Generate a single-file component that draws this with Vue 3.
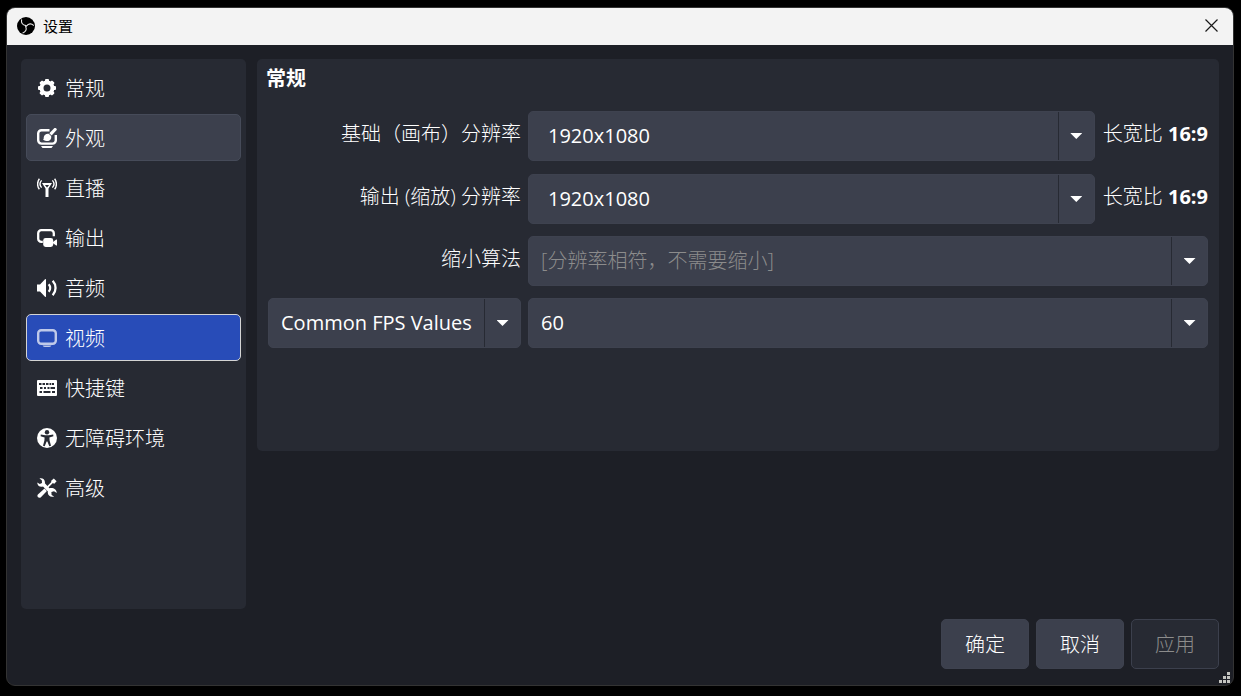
<script setup>
import { ref } from 'vue'

const current = ref('video')
const hovered = ref('appearance')
const sections = [
  { id: 'general', label: '常规' },
  { id: 'appearance', label: '外观' },
  { id: 'stream', label: '直播' },
  { id: 'output', label: '输出' },
  { id: 'audio', label: '音频' },
  { id: 'video', label: '视频' },
  { id: 'hotkeys', label: '快捷键' },
  { id: 'accessibility', label: '无障碍环境' },
  { id: 'advanced', label: '高级' },
]

const base = ref('1920x1080')
const output = ref('1920x1080')
const fpsType = ref('common')
const fps = ref('60')
</script>

<template>
  <div class="desktop">
    <div class="window" role="dialog" aria-labelledby="window-title">
      <header class="titlebar">
        <svg class="logo" viewBox="0 0 18 18" aria-hidden="true">
          <circle cx="9" cy="9" r="9" fill="#000" />
          <g fill="none" stroke="#e8e8e8" stroke-width="1.1" stroke-linecap="round">
            <path d="M4.6 2.8C4 5.6 5.2 8 9 8.600" />
            <path d="M4.6 2.8C4 5.6 5.2 8 9 8.600" transform="rotate(120 9 9)" />
            <path d="M4.6 2.8C4 5.6 5.2 8 9 8.600" transform="rotate(240 9 9)" />
          </g>
        </svg>
        <h1 id="window-title" class="title">设置</h1>
        <button class="close" type="button" aria-label="关闭">
          <svg viewBox="0 0 13 13"><path d="M.5.5l12 12M12.5.5l-12 12" fill="none" stroke="#1a1a1a" stroke-width="1.2" /></svg>
        </button>
      </header>

      <div class="body">
        <nav class="sidebar">
          <button
            v-for="s in sections"
            :key="s.id"
            type="button"
            class="nav-item"
            :class="{ active: current === s.id, hover: hovered === s.id }"
            @click="current = s.id"
            @mouseenter="hovered = s.id"
          >
            <svg class="icon" viewBox="0 0 20 20" aria-hidden="true">
              <g v-if="s.id === 'general'">
                <circle cx="10" cy="10" r="5.5" fill="none" stroke="#fff" stroke-width="4" />
                <g fill="#fff">
                  <rect v-for="a in 8" :key="a" x="8" y="1" width="4" height="3.6" rx="1" :transform="`rotate(${a * 45} 10 10)`" />
                </g>
              </g>
              <g v-else-if="s.id === 'appearance'">
                <path d="M12.5 2.200H4.500A3.300 3.300 0 0 0 1.200 5.500v6.800A3.300 3.300 0 0 0 4.500 15.600h11a3.300 3.300 0 0 0 3.300-3.300V7" fill="none" stroke="#fff" stroke-width="2.400" />
                <path d="M4 18h12l-1.500 2h-9z" fill="#fff" />
                <path d="M17.200.300c1.200-.600 3 .400 2.500 1.700L14.600 7.400 12.300 5.200z" fill="#fff" />
                <path d="M11.700 5.700l2.400 2.300c.700 2.800-1 5-3.500 5-1.700 0-3.300-.300-4.600-1.200 1-.600.600-1.600.800-2.700.400-2.300 2.400-3.800 4.900-3.400z" fill="#fff" />
              </g>
              <g v-else-if="s.id === 'stream'">
                <path d="M5 5h10l-3.500 5.500V19h-3v-8.500z" fill="#fff" />
                <path d="M7.900 6.900h4.200L10 9.500z" fill="#272a33" />
                <path d="M4.600 2.400c-2 2.200-2 5 0 7.200M2.400.800c-2.400 3-2.400 7.400 0 10.400M15.400 2.400c2 2.200 2 5 0 7.200M17.600.800c2.400 3 2.400 7.400 0 10.400" fill="none" stroke="#fff" stroke-width="1.400" />
              </g>
              <g v-else-if="s.id === 'output'">
                <path d="M5.800 13.800H4.300a3.100 3.100 0 0 1-3.100-3.100V5.300a3.100 3.100 0 0 1 3.100-3.100h9.400a3.100 3.100 0 0 1 3.100 3.100v3" fill="none" stroke="#fff" stroke-width="2.300" />
                <rect x="6.200" y="10" width="10" height="9" rx="2.400" fill="#fff" />
                <path d="M16 14l3.200-2.400q.8-.3.800.5v4.800q0 .8-.8.500L16 15.300z" fill="#fff" />
              </g>
              <g v-else-if="s.id === 'audio'">
                <path d="M0 6.500h3L8 1.200q1-.7 1 .5v16.600q0 1.200-1 .5L3 13.500H0z" fill="#fff" />
                <path d="M11.700 6.200c1.900 2.200 1.900 5.400 0 7.600M15.700 2.700c3.800 4.200 3.800 10.400 0 14.600" fill="none" stroke="#fff" stroke-width="2.300" />
              </g>
              <g v-else-if="s.id === 'video'" class="soft">
                <rect x="1.200" y="2.200" width="17.600" height="13.600" rx="3" fill="none" stroke="#fff" stroke-width="2.400" />
                <path d="M5.500 17.500h9q-1 1.500-2.500 1.500H8q-1.500 0-2.500-1.500z" fill="#fff" />
              </g>
              <g v-else-if="s.id === 'hotkeys'">
                <rect y="2" width="20" height="16" rx="1" fill="#fff" />
                <g fill="#272a33">
                  <path d="M2 5h2.500v2H2zM5.500 5H8v2H5.500zM9 5h2.500v2H9zM12.500 5h1.800v2h-1.800zM15 5h2v2h-2z" />
                  <path d="M3 9h2.500v2H3zM7 9h2v2H7zM10.500 9h2v2h-2zM13.500 9H18v2h-4.500z" />
                  <path d="M2.500 13H5v2H2.500zM6.500 13h7v2h-7zM15 13h3v2h-3z" />
                </g>
              </g>
              <g v-else-if="s.id === 'accessibility'">
                <circle cx="10" cy="10" r="10" fill="#fff" />
                <circle cx="10" cy="4.300" r="2.200" fill="#272a33" />
                <path d="M3.800 6.600L8.300 7.300h3.400l4.500-.7.200 1.700-4 1.100.2 3.200 1.400 5.100-1.700.5-1.900-4.700h-.8l-1.900 4.700-1.700-.5 1.400-5.100.2-3.200-4-1.100z" fill="#272a33" />
              </g>
              <g v-else>
                <path d="M17 2.700L9.500 10.200" stroke="#fff" stroke-width="1.700" />
                <path d="M16.800.5L19.600 3.200 17.300 5.800 14.400 4.600 14.200 2.800z" fill="#fff" />
                <path d="M7.500 10.500l2.400 2.400-6 6.300c-1.900 1.700-4.600-.6-3-2.800z" fill="#fff" />
                <path d="M2.500.5c3-.9 6 1.300 5.400 4.700l4.500 5.100c3.700-1 7.100 1 7.400 4.600l-2.800-1.700-2.600.8.200 3 2.500 1.400c-3.500 1.500-7.100-1.200-6.200-5L6 8.600C2.700 9.500.4 7.500.2 4.400l2.600 1.700 2.200-1.200-.2-2.600z" fill="#fff" />
              </g>
            </svg>
            <span>{{ s.label }}</span>
          </button>
        </nav>

        <main class="content">
          <section class="panel" aria-labelledby="panel-title">
            <h2 id="panel-title" class="panel-title">常规</h2>
            <div class="form">
              <label class="label" for="base">基础（画布）分辨率</label>
              <div class="field">
                <div class="combo">
                  <input id="base" v-model="base" class="value editable" type="text" />
                  <button class="arrow" type="button" aria-label="选择基础分辨率"></button>
                </div>
                <span class="ratio">长宽比 <b>16:9</b></span>
              </div>

              <label class="label" for="output">输出 (缩放) 分辨率</label>
              <div class="field">
                <div class="combo">
                  <input id="output" v-model="output" class="value editable" type="text" />
                  <button class="arrow" type="button" aria-label="选择输出分辨率"></button>
                </div>
                <span class="ratio">长宽比 <b>16:9</b></span>
              </div>

              <label class="label" for="filter">缩小算法</label>
              <div class="combo">
                <select id="filter" class="value" disabled>
                  <option>[分辨率相符，不需要缩小]</option>
                </select>
                <span class="arrow" aria-hidden="true"></span>
              </div>

              <div class="combo">
                <select v-model="fpsType" class="value" aria-label="FPS 类型">
                  <option value="common">Common FPS Values</option>
                </select>
                <span class="arrow" aria-hidden="true"></span>
              </div>
              <div class="combo">
                <select v-model="fps" class="value" aria-label="FPS">
                  <option>60</option>
                </select>
                <span class="arrow" aria-hidden="true"></span>
              </div>
            </div>
          </section>
        </main>
      </div>

      <footer class="footer">
        <button class="btn" type="button">确定</button>
        <button class="btn" type="button">取消</button>
        <button class="btn" type="button" disabled>应用</button>
      </footer>

      <svg class="grip" viewBox="0 0 11 11" aria-hidden="true">
        <path d="M8 0h3v3H8zM4 4h3v3H4zM8 4h3v3H8zM0 8h3v3H0zM4 8h3v3H4zM8 8h3v3H8z" fill="#c4c4c0" />
      </svg>
    </div>
  </div>
</template>

<style>
body {
  background: #000;
}
</style>

<style scoped>
.desktop {
  box-sizing: border-box;
  min-height: 100vh;
  padding: 7px 7px 10px 6px;
  display: flex;
  background: #000;
  color: #fff;
  font: 20px/28px "Open Sans", "Noto Sans CJK SC", sans-serif;
}
.desktop *,
.desktop *::before {
  box-sizing: border-box;
}
button,
input,
select {
  margin: 0;
  padding: 0;
  border: 0;
  background: none;
  color: inherit;
  font: inherit;
}
.window {
  position: relative;
  flex: 1;
  min-width: 0;
  display: flex;
  flex-direction: column;
  overflow: hidden;
  border: 1px solid #333333;
  border-radius: 9px;
  background: #1d1f26;
}
.titlebar {
  display: flex;
  align-items: center;
  height: 37px;
  padding: 0 15px 2px 10px;
  background: #f3f3f3;
  color: #000;
}
.logo {
  width: 18px;
  height: 18px;
}
.title {
  flex: 1;
  margin: 0 0 0 8px;
  font-size: 15px;
  line-height: 20px;
  font-weight: 400;
}
.close,
.close svg {
  display: block;
  width: 13px;
  height: 13px;
}
.body {
  flex: 1;
  display: flex;
  gap: 11px;
  padding: 14px 14px 10px;
}
.sidebar {
  flex: 0 0 225px;
  display: flex;
  flex-direction: column;
  gap: 3px;
  padding: 5px;
  border-radius: 5px;
  background: #272a33;
}
.nav-item {
  display: flex;
  align-items: center;
  gap: 8px;
  height: 47px;
  padding: 0 10px;
  border: 1px solid transparent;
  border-radius: 5px;
  text-align: left;
}
.nav-item,
.label,
.ratio,
.btn,
.value:disabled {
  font-weight: 300;
}
.nav-item span,
.btn {
  padding-top: 2px;
}
.nav-item.hover {
  border-color: #464b59;
  background: #3c404d;
}
.nav-item.active {
  border-color: #d4d4d4;
  background: #284cb8;
}
.icon {
  flex: none;
  width: 20px;
  height: 20px;
}
.soft {
  opacity: 0.7;
}
.content {
  flex: 1;
  min-width: 0;
}
.panel {
  padding: 6px 11px 103px;
  border-radius: 5px;
  background: #272a33;
}
.panel-title {
  margin: 0 -2px 18px;
  font-size: 20px;
  line-height: 28px;
  font-weight: 700;
}
.form {
  display: grid;
  grid-template-columns: 253px minmax(0, 1fr);
  grid-template-rows: 51px repeat(3, 50px);
  gap: 12px 7px;
}
.label {
  padding-top: 9px;
  text-align: right;
}
.field {
  display: flex;
  gap: 8px;
}
.combo {
  position: relative;
  flex: 1;
  min-width: 0;
  display: flex;
  height: 50px;
  border: 1px solid #3e424f;
  border-radius: 5px;
  background: #3c404d;
}
.value {
  flex: 1;
  min-width: 0;
  padding: 0 40px 0 12px;
  outline: 0;
  appearance: none;
  border-radius: 5px;
}
.value:disabled {
  color: #8c8c8c;
  opacity: 1;
}
.editable {
  padding-left: 19px;
}
.arrow {
  position: absolute;
  top: 0;
  right: 0;
  width: 36px;
  height: 48px;
  display: flex;
  align-items: center;
  justify-content: center;
  border-left: 1px solid #272a33;
  pointer-events: none;
}
.arrow::before {
  content: "";
  width: 12px;
  height: 6px;
  background: #fff;
  clip-path: polygon(0 0, 100% 0, 50% 100%);
}
.ratio {
  padding-top: 9px;
  white-space: nowrap;
}
.ratio b {
  font-weight: 700;
}
.footer {
  display: flex;
  justify-content: flex-end;
  gap: 7px;
  padding: 0 14px 16px;
}
.btn {
  width: 88px;
  height: 50px;
  border: 1px solid #3e424f;
  border-radius: 5px;
  background: #3c404d;
}
.btn:disabled {
  border-color: #3c404d;
  background: #272a33;
  color: #8c8c8c;
}
.grip {
  position: absolute;
  right: 3px;
  bottom: 2px;
  width: 11px;
  height: 11px;
}
</style>
